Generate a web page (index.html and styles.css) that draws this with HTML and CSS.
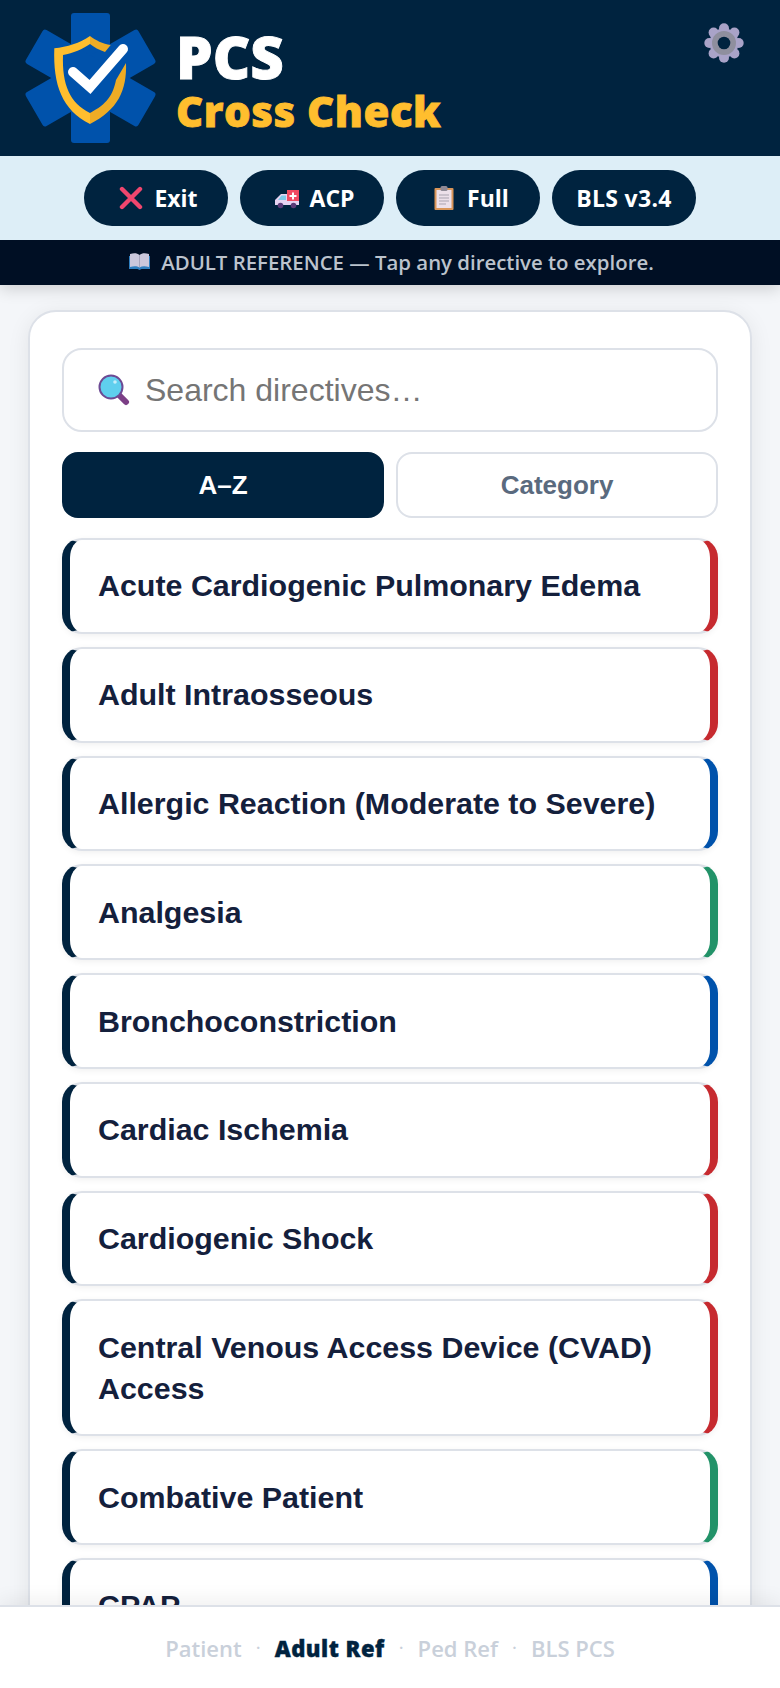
FILE: index.html
```html
<!DOCTYPE html>
<html lang="en">
<head>
<meta charset="utf-8">
<title>PCS Cross Check</title>
<link rel="stylesheet" href="styles.css">
</head>
<body>
<div class="app">
  <header class="masthead">
    <svg class="logo" viewBox="20 8 140 140" aria-hidden="true">
      <g fill="#0052ab">
        <rect x="71" y="13" width="39" height="130" rx="3"/>
        <rect x="71" y="13" width="39" height="130" rx="3" transform="rotate(60 90.500 78)"/>
        <rect x="71" y="13" width="39" height="130" rx="3" transform="rotate(-60 90.500 78)"/>
      </g>
      <path fill="#ffbe2e" d="M90 36C80 43 67 47 54.300 48.300C53 85 62 110 90 124L90 113C70 103 62 85 63 55C73 53 83 49 90 44Z"/>
      <path fill="#eeac25" d="M90 36C95 40 103 44 110.700 45L105 52C99 50 94 47 90 44Z"/>
      <path fill="#eeac25" d="M126 63C127 90 118 110 90 124L90 113C107 104 113 95 116 80Z"/>
      <path fill="none" stroke="#fff" stroke-width="10" stroke-linecap="round" stroke-linejoin="miter" d="M73 72L90 87L123 49"/>
    </svg>
    <div class="brand">
      <div class="brand-top">PCS</div>
      <div class="brand-sub">Cross Check</div>
    </div>
    <svg class="gear" viewBox="0 0 40 40" aria-hidden="true">
      <g fill="#a9a3c8">
        <circle cx="20" cy="20" r="14.500"/>
        <circle cx="20" cy="5.300" r="5"/>
        <circle cx="20" cy="34.700" r="5"/>
        <circle cx="5.300" cy="20" r="5"/>
        <circle cx="34.700" cy="20" r="5"/>
        <circle cx="9.600" cy="9.600" r="5"/>
        <circle cx="30.400" cy="9.600" r="5"/>
        <circle cx="9.600" cy="30.400" r="5"/>
        <circle cx="30.400" cy="30.400" r="5"/>
      </g>
      <circle cx="20" cy="20" r="12" fill="#8f8f9e"/>
      <circle cx="20" cy="20" r="6.300" fill="#00233f"/>
    </svg>
  </header>

  <nav class="toolbar">
    <button class="pill pill-with-icon">
      <svg class="pill-icon" viewBox="0 0 24 24"><path stroke="#f0466e" stroke-width="4.400" stroke-linecap="round" d="M3 3l18 18M21 3L3 21"/></svg>
      <span>Exit</span>
    </button>
    <button class="pill pill-with-icon">
      <svg class="pill-icon" viewBox="0 0 24 24">
        <path fill="#e6d3f2" d="M6 8h18v11H0v-5z"/>
        <path fill="#f04b63" d="M12 4h12v11H12z"/>
        <path fill="#fff" d="M17 6.500h2v2.500h2.500v2H19v2.500h-2V11h-2.500V9H17z"/>
        <path fill="#7cc9ea" d="M6.500 9.500H11V14H3z"/>
        <circle cx="5.500" cy="19.500" r="2.800" fill="#5b3a78"/><circle cx="18.500" cy="19.500" r="2.800" fill="#5b3a78"/>
      </svg>
      <span>ACP</span>
    </button>
    <button class="pill pill-with-icon">
      <svg class="pill-icon" viewBox="0 0 24 24">
        <rect x="2.500" y="2" width="19" height="22" rx="1" fill="#d99559"/>
        <rect x="4.500" y="4" width="15" height="18" fill="#ece0ea"/>
        <rect x="8.500" y="0" width="7" height="5" rx="1.500" fill="#8f8a96"/>
        <path stroke="#a9a3b0" stroke-width="1" d="M7 9h10M7 12h10M7 15h10M7 18h7"/>
      </svg>
      <span>Full</span>
    </button>
    <button class="pill pill-wide-text"><span>BLS v3.4</span></button>
  </nav>

  <div class="notice">
    <svg class="notice-icon" viewBox="0 0 21 17">
      <path fill="#2f7fc0" d="M0 3h21v13h-8.500l-2 1-2-1H0z"/>
      <path fill="#cbc8dc" d="M1 1c4-1 7-1 9.500 1v12.500C8 13 5 13 1 14zM20 1c-4-1-7-1-9.500 1v12.500C13 13 16 13 20 14z"/>
      <path fill="#8f8fa8" d="M10.200 2h.6v12.500h-.6z"/>
    </svg>
    <span>ADULT REFERENCE — Tap any directive to explore.</span>
  </div>

  <main class="content">
    <section class="card">
      <div class="search">
        <svg class="search-icon" viewBox="0 0 32 32">
          <path stroke="#7c3f86" stroke-width="6" stroke-linecap="round" d="M21 21l7 7"/>
          <circle cx="13" cy="13" r="11.500" fill="#5fcfee" stroke="#6d4a94" stroke-width="2"/>
          <circle cx="17" cy="8" r="1.800" fill="#c5eefa"/>
        </svg>
        <span class="search-placeholder">Search directives…</span>
      </div>
      <div class="tabs">
        <div class="tab tab-active">A–Z</div>
        <div class="tab">Category</div>
      </div>
      <ul class="list">
        <li class="item red">Acute Cardiogenic Pulmonary Edema</li>
        <li class="item red">Adult Intraosseous</li>
        <li class="item blue">Allergic Reaction (Moderate to Severe)</li>
        <li class="item green">Analgesia</li>
        <li class="item blue">Bronchoconstriction</li>
        <li class="item red">Cardiac Ischemia</li>
        <li class="item red">Cardiogenic Shock</li>
        <li class="item red">Central Venous Access Device (CVAD) Access</li>
        <li class="item green">Combative Patient</li>
        <li class="item blue">CPAP</li>
      </ul>
    </section>
  </main>

  <footer class="bottom">
    <span class="crumb">Patient</span><span class="dot">·</span><span class="crumb crumb-active">Adult Ref</span><span class="dot">·</span><span class="crumb">Ped Ref</span><span class="dot">·</span><span class="crumb">BLS PCS</span>
  </footer>
</div>
</body>
</html>
```
FILE: styles.css
```css
* { box-sizing: border-box; }
html, body { margin: 0; height: 100%; }
body { font-family: "Open Sans", "Noto Sans", sans-serif; background: #f4f6f9; overflow: hidden; }
.app { height: 1688px; display: flex; flex-direction: column; position: relative; }

.masthead { height: 156px; background: #00233f; display: flex; align-items: center; padding: 0 0 0 20px; flex: none; }
.logo { width: 140px; height: 140px; flex: none; }
.brand { margin-left: 16px; display: flex; flex-direction: column; margin-top: 4px; }
.brand-top { font-size: 58px; line-height: 62px; font-weight: 800; color: #fff; -webkit-text-stroke: 0.9px #fff; }
.brand-sub { font-size: 42px; line-height: 46px; font-weight: 800; color: #ffbe2e; letter-spacing: 0.5px; -webkit-text-stroke: 0.8px #ffbe2e; }
.gear { position: absolute; left: 704px; top: 23px; width: 40px; height: 40px; }

.toolbar { height: 84px; background: #ddeef7; display: flex; justify-content: center; align-items: center; gap: 12px; flex: none; position: relative; z-index: 1; }
.pill { width: 144px; height: 56px; border: 0; border-radius: 28px; background: #00233f; color: #fff; font: 700 23px "Open Sans", sans-serif; display: flex; align-items: center; justify-content: center; gap: 11px; padding: 0; }
.pill-with-icon { padding-left: 5px; }
.pill-wide-text { letter-spacing: 0.3px; }
.pill-icon { width: 24px; height: 24px; flex: none; fill: none; }

.notice { height: 45px; background: #000f24; color: #bcc3cd; font-size: 20.400px; font-weight: 600; display: flex; align-items: center; justify-content: center; gap: 11px; padding: 0 0 2px 3px; box-shadow: 0 4px 16px rgba(0,0,0,.16); flex: none; position: relative; }
.notice-icon { width: 21px; height: 17px; flex: none; }

.content { flex: 1; min-height: 0; padding: 25px 28px 0; overflow: hidden; }
.card { background: #fff; border: 2px solid #dde1e8; border-radius: 28px; padding: 36px 32px 0; box-shadow: 0 4px 22px rgba(0,0,0,.08); }
.search { height: 84px; border: 2px solid #dde1e8; border-radius: 20px; display: flex; align-items: center; padding-left: 34px; gap: 15px; }
.search-icon { width: 32px; height: 32px; flex: none; fill: none; }
.search-placeholder { font: 400 32px "Liberation Sans", sans-serif; color: #757575; }
.tabs { display: grid; grid-template-columns: 1fr 1fr; gap: 12px; margin-top: 20px; }
.tab { height: 66px; border: 2px solid #dde1e8; border-radius: 16px; display: flex; align-items: center; justify-content: center; font: 700 26px "Liberation Sans", sans-serif; color: #5a6a7e; }
.tab-active { background: #00233f; border-color: #00233f; color: #fff; }

.list { list-style: none; margin: 20px 0 0; padding: 0; display: flex; flex-direction: column; gap: 13px; }
.item { border: 2px solid #dde1e8; border-left: 8px solid #00233f; border-right: 8px solid #0052ab; border-radius: 20px; padding: 25.400px 28px; font: 700 30.400px/41px "Liberation Sans", sans-serif; color: #14203c; box-shadow: 0 2px 6px rgba(0,0,0,.06); }
.red { border-right-color: #c62a2f; }
.blue { border-right-color: #0052ab; }
.green { border-right-color: #229268; }

.bottom { position: absolute; left: 0; right: 0; bottom: 0; height: 83px; background: #fff; border-top: 2px solid #dde1e8; box-shadow: 0 -6px 18px rgba(0,0,0,.06); display: flex; align-items: center; justify-content: center; font-size: 22px; font-weight: 600; color: #c9d0da; }
.crumb-active { color: #00233f; font-weight: 800; letter-spacing: 0.5px; -webkit-text-stroke: 0.4px #00233f; }
.dot { width: 33px; text-align: center; font-size: 16px; }
```
